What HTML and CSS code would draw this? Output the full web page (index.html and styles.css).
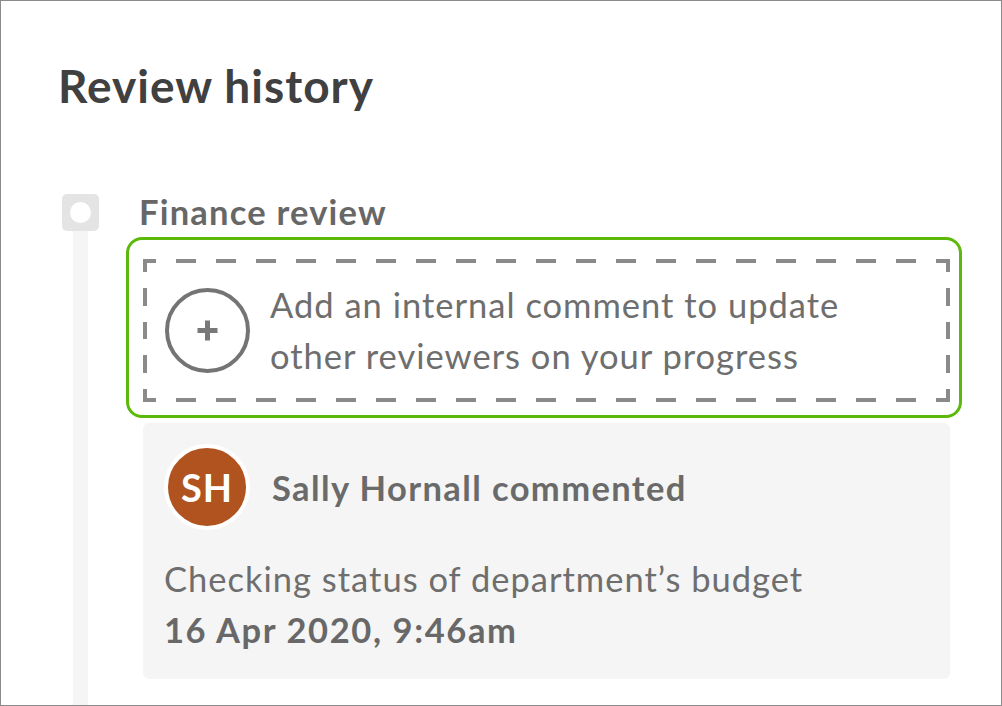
FILE: index.html
```html
<!DOCTYPE html>
<html lang="en">
<head>
    <meta charset="UTF-8">
    <meta name="viewport" content="width=device-width, initial-scale=1.0">
    <title>Review history</title>
    <link rel="stylesheet" href="styles.css">
</head>
<body>
    <div class="frame">
        <h1 class="title">Review history</h1>

        <div class="timeline">
            <div class="rail">
                <div class="node"><span class="node-dot"></span></div>
                <div class="track"></div>
            </div>

            <div class="stage">
                <h2 class="stage-name">Finance review</h2>

                <div class="focus-ring">
                    <div class="add-comment">
                        <svg class="add-icon" width="85" height="85" viewBox="0 0 85 85">
                            <circle cx="42.5" cy="42.5" r="40.5" fill="none" stroke="#747474" stroke-width="4"/>
                            <path d="M32.5 42.5h20M42.5 32.5v20" stroke="#787878" stroke-width="5"/>
                        </svg>
                        <span class="add-text">Add an internal comment to update<br>other reviewers on your progress</span>
                    </div>
                </div>

                <div class="comment">
                    <div class="comment-head">
                        <div class="avatar">SH</div>
                        <span class="author">Sally Hornall commented</span>
                    </div>
                    <p class="comment-body">
                        Checking status of department’s budget<br>
                        <strong>16 Apr 2020, 9:46am</strong>
                    </p>
                </div>
            </div>
        </div>
    </div>
</body>
</html>
```

FILE: styles.css
```css
* {
    box-sizing: border-box;
}

body {
    margin: 0;
    font-family: Lato, "Open Sans", sans-serif;
    background-color: #fff;
}

.frame {
    width: 1002px;
    height: 706px;
    border: 1px solid #8b8b8b;
    padding: 59px 39px 0 57px;
    display: flex;
    flex-direction: column;
    overflow: hidden;
}

.title {
    margin: 0;
    font-size: 46px;
    line-height: 52px;
    font-weight: 700;
    letter-spacing: 1px;
    color: #404040;
}

.timeline {
    flex: 1;
    display: grid;
    grid-template-columns: 37px 1fr;
    column-gap: 27px;
    margin: 78px 0 0 4px;
}

/* left rail with the stage marker */
.rail {
    display: flex;
    flex-direction: column;
    padding-top: 4px;
}

.node {
    width: 37px;
    height: 37px;
    border-radius: 5px;
    background: #e4e4e4;
    display: flex;
    align-items: center;
    justify-content: center;
}

.node-dot {
    width: 21px;
    height: 21px;
    border-radius: 50%;
    background: #fff;
}

.track {
    flex: 1;
    width: 15px;
    margin-left: 11px;
    background: #f5f5f5;
}

.stage-name {
    margin: 0;
    padding-left: 13px;
    font-size: 34.5px;
    line-height: 44px;
    font-weight: 700;
    letter-spacing: 1.2px;
    color: #676767;
}

.focus-ring {
    margin-top: 3px;
    border: 3px solid #5cb90a;
    border-radius: 16px;
    padding: 19px 9px 13px 14px;
}

.add-comment {
    display: flex;
    align-items: center;
    gap: 20px;
    padding: 20px 20px 21px 22px;
    background:
        repeating-linear-gradient(to right, #8a8a8a 0 13px, transparent 13px 33px, #8a8a8a 33px 40px) left top / 100% 4px no-repeat,
        repeating-linear-gradient(to right, #8a8a8a 0 13px, transparent 13px 33px, #8a8a8a 33px 40px) left bottom / 100% 4px no-repeat,
        repeating-linear-gradient(to bottom, #8a8a8a 0 13px, transparent 13px 29px, #8a8a8a 29px 33.5px) left top / 4px 100% no-repeat,
        repeating-linear-gradient(to bottom, #8a8a8a 0 13px, transparent 13px 29px, #8a8a8a 29px 33.5px) right top / 4px 100% no-repeat;
    cursor: pointer;
}

.add-icon {
    flex-shrink: 0;
}

.add-text {
    font-size: 34.5px;
    line-height: 51px;
    letter-spacing: 1px;
    color: #6e6e6e;
}

.comment {
    margin: 5px 12px 0 17px;
    background: #f5f5f5;
    border-radius: 6px;
    padding: 21px 20px 24px 21px;
}

.comment-head {
    display: flex;
    align-items: center;
    gap: 22px;
}

.avatar {
    width: 86px;
    height: 86px;
    border-radius: 50%;
    border: 4px solid #fff;
    background: #b0531f;
    color: #fff;
    font-size: 38px;
    font-weight: 700;
    letter-spacing: 1px;
    display: flex;
    align-items: center;
    justify-content: center;
}

.author {
    font-size: 34.5px;
    font-weight: 700;
    letter-spacing: 1.4px;
    color: #6a6a6a;
}

.comment-body {
    margin: 23px 0 0;
    font-size: 34.5px;
    line-height: 51px;
    letter-spacing: 1px;
    color: #6e6e6e;
}

.comment-body strong {
    font-weight: 700;
    letter-spacing: 1.6px;
    color: #686868;
}
```
